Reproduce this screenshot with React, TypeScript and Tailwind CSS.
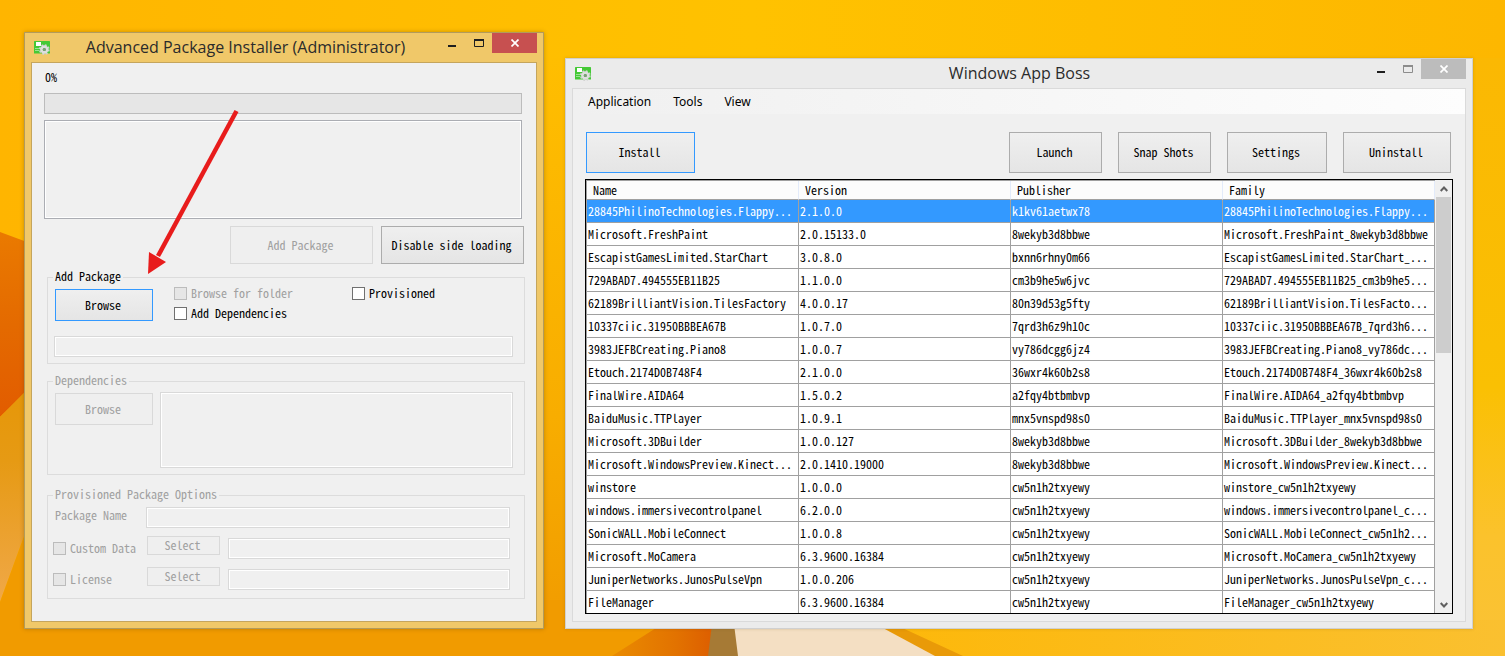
import React from "react";

type Row = [string, string, string, string];

const rows: Row[] = [
  ["28845PhilinoTechnologies.Flappy...", "2.1.0.0", "k1kv61aetwx78", "28845PhilinoTechnologies.Flappy..."],
  ["Microsoft.FreshPaint", "2.0.15133.0", "8wekyb3d8bbwe", "Microsoft.FreshPaint_8wekyb3d8bbwe"],
  ["EscapistGamesLimited.StarChart", "3.0.8.0", "bxnn6rhny0m66", "EscapistGamesLimited.StarChart_..."],
  ["729ABAD7.494555EB11B25", "1.1.0.0", "cm3b9he5w6jvc", "729ABAD7.494555EB11B25_cm3b9he5..."],
  ["62189BrilliantVision.TilesFactory", "4.0.0.17", "80n39d53g5fty", "62189BrilliantVision.TilesFacto..."],
  ["10337ciic.31950BBBEA67B", "1.0.7.0", "7qrd3h6z9h10c", "10337ciic.31950BBBEA67B_7qrd3h6..."],
  ["3983JEFBCreating.Piano8", "1.0.0.7", "vy786dcgg6jz4", "3983JEFBCreating.Piano8_vy786dc..."],
  ["Etouch.2174D0B748F4", "2.1.0.0", "36wxr4k60b2s8", "Etouch.2174D0B748F4_36wxr4k60b2s8"],
  ["FinalWire.AIDA64", "1.5.0.2", "a2fqy4btbmbvp", "FinalWire.AIDA64_a2fqy4btbmbvp"],
  ["BaiduMusic.TTPlayer", "1.0.9.1", "mnx5vnspd98s0", "BaiduMusic.TTPlayer_mnx5vnspd98s0"],
  ["Microsoft.3DBuilder", "1.0.0.127", "8wekyb3d8bbwe", "Microsoft.3DBuilder_8wekyb3d8bbwe"],
  ["Microsoft.WindowsPreview.Kinect...", "2.0.1410.19000", "8wekyb3d8bbwe", "Microsoft.WindowsPreview.Kinect..."],
  ["winstore", "1.0.0.0", "cw5n1h2txyewy", "winstore_cw5n1h2txyewy"],
  ["windows.immersivecontrolpanel", "6.2.0.0", "cw5n1h2txyewy", "windows.immersivecontrolpanel_c..."],
  ["SonicWALL.MobileConnect", "1.0.0.8", "cw5n1h2txyewy", "SonicWALL.MobileConnect_cw5n1h2..."],
  ["Microsoft.MoCamera", "6.3.9600.16384", "cw5n1h2txyewy", "Microsoft.MoCamera_cw5n1h2txyewy"],
  ["JuniperNetworks.JunosPulseVpn", "1.0.0.206", "cw5n1h2txyewy", "JuniperNetworks.JunosPulseVpn_c..."],
  ["FileManager", "6.3.9600.16384", "cw5n1h2txyewy", "FileManager_cw5n1h2txyewy"],
];

const columns = ["Name", "Version", "Publisher", "Family"];

function Wallpaper() {
  return (
    <svg className="absolute inset-0 h-full w-full" viewBox="0 0 1505 656" preserveAspectRatio="none" aria-hidden="true">
      <defs>
        <linearGradient id="sky" x1="0" y1="0" x2="1" y2="0">
          <stop offset="0" stopColor="#ffb500" />
          <stop offset="0.5" stopColor="#ffc200" />
          <stop offset="1" stopColor="#fdb700" />
        </linearGradient>
        <linearGradient id="east" x1="0" y1="0" x2="0" y2="1">
          <stop offset="0" stopColor="#fbb803" />
          <stop offset="0.55" stopColor="#fac003" />
          <stop offset="0.8" stopColor="#fbc22c" />
          <stop offset="1" stopColor="#fac236" />
        </linearGradient>
        <linearGradient id="mid" x1="0" y1="0" x2="0" y2="1">
          <stop offset="0" stopColor="#ffbe00" />
          <stop offset="0.6" stopColor="#f8ad00" />
          <stop offset="1" stopColor="#f09900" />
        </linearGradient>
        <linearGradient id="fold" x1="0" y1="0" x2="0" y2="1">
          <stop offset="0" stopColor="#ea7a00" />
          <stop offset="0.5" stopColor="#e46a00" />
          <stop offset="1" stopColor="#e25c00" />
        </linearGradient>
        <linearGradient id="sand" x1="0" y1="0" x2="0" y2="1">
          <stop offset="0" stopColor="#e69500" />
          <stop offset="0.45" stopColor="#e69a14" />
          <stop offset="1" stopColor="#f0a848" />
        </linearGradient>
        <linearGradient id="ember" x1="0" y1="0" x2="1" y2="0">
          <stop offset="0" stopColor="#ea8b00" />
          <stop offset="0.6" stopColor="#e27200" />
          <stop offset="1" stopColor="#dc5a00" />
        </linearGradient>
        <linearGradient id="dune" x1="0" y1="0" x2="1" y2="0">
          <stop offset="0" stopColor="#fdb80a" />
          <stop offset="1" stopColor="#fac030" />
        </linearGradient>
      </defs>
      <rect width="1505" height="656" fill="url(#sky)" />
      <rect x="540" y="58" width="40" height="598" fill="url(#mid)" />
      <rect x="1460" y="58" width="45" height="598" fill="url(#east)" />
      <path d="M0 232 L70 258 L70 350 L0 417 Z" fill="url(#fold)" />
      <path d="M0 417 L70 346 L70 410 L0 602 Z" fill="url(#sand)" />
      <path d="M0 602 L70 410 L70 600 L720 600 L720 656 L0 656 Z" fill="#f19b00" />
      <path d="M700 600 L720 600 L720 656 L612 656 Z" fill="url(#ember)" />
      <path d="M715 600 L732 600 L740 656 L708 656 Z" fill="#a67a35" />
      <path d="M731 600 L850 600 L940 656 L738 656 Z" fill="#f4dfc3" />
      <path d="M868 620 L900 620 L970 656 L935 656 Z" fill="#e99a08" />
      <path d="M885 620 L1505 620 L1505 656 L963 656 Z" fill="url(#dune)" />
    </svg>
  );
}

function AppIcon() {
  return (
    <svg className="h-[14px] w-4 shrink-0" viewBox="0 0 16 14" aria-hidden="true">
      <rect x="0" y="0" width="16" height="12.500" rx="0.6" fill="#45c936" />
      <rect x="2" y="1" width="5" height="4" fill="#fff" />
      <path d="M1 7.5h4.500M1 9.5h4.500" stroke="#9be291" strokeWidth="1" />
      <circle cx="10.300" cy="8.500" r="4.400" fill="none" stroke="#cfcfcf" strokeWidth="2" strokeDasharray="1.9 1.55" />
      <circle cx="10.300" cy="8.500" r="2.900" fill="none" stroke="#dedede" strokeWidth="2.600" />
      <circle cx="10.300" cy="8.500" r="1.500" fill="#7f9b7c" />
    </svg>
  );
}

function TitleBar({ title, active }: { title: string; active: boolean }) {
  return (
    <header className="flex h-[29px] items-start">
      <div className={active ? "flex w-7 shrink-0 pt-2 pl-[9px]" : "flex w-[106px] shrink-0 pt-2 pl-[9px]"}>
        <AppIcon />
      </div>
      <h1 className="flex-1 text-center font-['Open_Sans','Noto_Sans',sans-serif] text-[16px] leading-[29px] whitespace-nowrap text-[#2b2b2b]">
        {title}
      </h1>
      <div className="mr-1.5 flex h-5 shrink-0">
        <button type="button" aria-label="Minimize" className="flex w-[27px] items-center justify-center">
          <svg className="h-[10px] w-[10px]" viewBox="0 0 10 10" aria-hidden="true">
            <rect x="1" y="7" width="8" height="2" fill="#1e1e1e" />
          </svg>
        </button>
        <button type="button" aria-label="Maximize" className={active ? "flex w-[27px] items-center justify-center text-[#1e1e1e]" : "flex w-[27px] items-center justify-center text-[#8c8c8c]"}>
          <svg className="h-[10px] w-[10px]" viewBox="0 0 10 10" aria-hidden="true">
            <path d="M0.5 1.5h9v7h-9z" fill="none" stroke="currentColor" />
            <rect x="0" y="1" width="10" height="2" fill="currentColor" />
          </svg>
        </button>
        <button type="button" aria-label="Close" className={active ? "flex w-[45px] items-center justify-center bg-[#c75050]" : "flex w-[45px] items-center justify-center bg-[#bcbcbc]"}>
          <svg className="h-2 w-2" viewBox="0 0 8 8" aria-hidden="true">
            <path d="M0.5 0.5l7 7M7.5 0.5l-7 7" stroke="#fff" strokeWidth="1.7" />
          </svg>
        </button>
      </div>
    </header>
  );
}

function PushButton({ children, size, disabled, focused }: { children: React.ReactNode; size: string; disabled?: boolean; focused?: boolean }) {
  const look = disabled
    ? "border-[#d9d9d9] bg-[#efefef] text-[#a0a0a0]"
    : focused
      ? "border-[#3399ff] bg-linear-to-b from-[#efefef] to-[#e5e5e5] text-black"
      : "border-[#acacac] bg-linear-to-b from-[#efefef] to-[#e5e5e5] text-black";
  return (
    <button type="button" disabled={disabled} className={`flex shrink-0 items-center justify-center border pr-0.5 pb-px whitespace-nowrap ${look} ${size}`}>
      {children}
    </button>
  );
}

function CheckBox({ children, disabled }: { children: React.ReactNode; disabled?: boolean }) {
  return (
    <label className={disabled ? "flex h-[13px] items-start gap-1 leading-[11px] whitespace-nowrap text-[#a0a0a0]" : "flex h-[13px] items-start gap-1 leading-[11px] whitespace-nowrap text-black"}>
      <input
        type="checkbox"
        disabled={disabled}
        className="h-[13px] w-[13px] shrink-0 appearance-none border border-[#707070] bg-white disabled:border-[#bcbcbc] disabled:bg-[#e6e6e6]"
      />
      {children}
    </label>
  );
}

const field = "block resize-none border border-[#d9d9d9] bg-[#f0f0f0] px-1 shadow-[inset_0_0_0_1px_#fff] outline-none";
const group = "ml-[3px] -mr-[3px] border border-[#dcdcdc]";
const legend = "ml-[5px] h-[13px] px-0.5 leading-[10px]";

function Installer() {
  return (
    <section className="relative mt-8 w-[520px] shrink-0 self-start border border-[#b29b5c] bg-[#f0c869] shadow-[0_0_4px_rgba(90,60,0,0.35)]">
      <TitleBar title="Advanced Package Installer (Administrator)" active />
      <div className="mx-1.5 mb-1.5 flex flex-col border border-[#c5a55c] bg-[#f0f0f0] pt-[7px] pr-[14px] pb-[22px] pl-3">
        <p className="ml-px leading-[13px]">0%</p>
        <div role="progressbar" aria-label="Progress" aria-valuenow={0} className="mt-[10px] h-[21px] border border-[#bcbcbc] bg-[#e6e6e6]" />
        <textarea aria-label="Log" readOnly className="mt-1.5 block h-[99px] resize-none border border-[#abadb3] bg-[#f0f0f0] shadow-[inset_0_0_0_1px_#fff] outline-none" />
        <div className="mt-[7px] -mr-0.5 flex justify-end gap-2">
          <PushButton size="h-[38px] w-[143px]" disabled>Add Package</PushButton>
          <PushButton size="h-[38px] w-[143px]">Disable side loading</PushButton>
        </div>

        <fieldset className={`mt-[7px] ${group}`}>
          <legend className={legend}>Add Package</legend>
          <div className="flex pt-[5px] pl-[7px]">
            <PushButton size="h-8 w-[98px]" focused>Browse</PushButton>
            <div className="ml-[21px] -mt-0.5 flex w-[178px] flex-col gap-[7px]">
              <CheckBox disabled>Browse for folder</CheckBox>
              <CheckBox>Add Dependencies</CheckBox>
            </div>
            <div className="-mt-0.5">
              <CheckBox>Provisioned</CheckBox>
            </div>
          </div>
          <div className="pt-[15px] pr-[11px] pb-1.5 pl-1.5">
            <input type="text" aria-label="Package path" disabled className={`h-[21px] w-full ${field}`} />
          </div>
        </fieldset>

        <fieldset disabled className={`mt-[11px] text-[#a0a0a0] ${group}`}>
          <legend className={legend}>Dependencies</legend>
          <div className="flex gap-[7px] pt-1 pr-[11px] pb-1.5 pl-[7px]">
            <PushButton size="mt-px h-8 w-[98px]" disabled>Browse</PushButton>
            <textarea aria-label="Dependencies" className={`h-[76px] flex-1 ${field}`} />
          </div>
        </fieldset>

        <fieldset disabled className={`mt-[14px] text-[#a0a0a0] ${group}`}>
          <legend className={legend}>Provisioned Package Options</legend>
          <div className="flex flex-col gap-[10px] pt-[5px] pr-[14px] pb-2 pl-[5px]">
            <div className="flex h-[21px] items-center">
              <label htmlFor="package-name" className="w-[93px] pb-1.5 pl-0.5">Package Name</label>
              <input id="package-name" type="text" className={`h-[21px] flex-1 ${field}`} />
            </div>
            <div className="flex h-[21px] items-center">
              <div className="w-[94px]"><CheckBox disabled>Custom Data</CheckBox></div>
              <div className="mr-2 pb-1.5"><PushButton size="h-[19px] w-[73px]" disabled>Select</PushButton></div>
              <input type="text" aria-label="Custom data path" className={`h-[21px] min-w-0 flex-1 ${field}`} />
            </div>
            <div className="flex h-[21px] items-center">
              <div className="w-[94px]"><CheckBox disabled>License</CheckBox></div>
              <div className="mr-2 pb-1.5"><PushButton size="h-[19px] w-[73px]" disabled>Select</PushButton></div>
              <input type="text" aria-label="License path" className={`h-[21px] min-w-0 flex-1 ${field}`} />
            </div>
          </div>
        </fieldset>
      </div>

      <svg className="pointer-events-none absolute top-[73px] left-[119px] h-[172px] w-[98px]" viewBox="0 0 98 172" aria-hidden="true">
        <path d="M92.500 5 L14 150" stroke="#e81c1c" strokeWidth="4.500" />
        <path d="M4 168 L5 146 L22 156 Z" fill="#e81c1c" />
      </svg>
    </section>
  );
}

function ScrollBar() {
  return (
    <div className="flex w-[17px] shrink-0 flex-col bg-[#f0f0f0] px-px" aria-hidden="true">
      <div className="flex h-[17px] items-center justify-center">
        <svg className="h-2 w-2" viewBox="0 0 8 8"><path d="M0.700 6L4 2.500L7.300 6" fill="none" stroke="#606060" strokeWidth="2" /></svg>
      </div>
      <div className="h-[156px] bg-[#cdcdcd]" />
      <div className="flex-1" />
      <div className="flex h-[17px] items-center justify-center">
        <svg className="h-2 w-2" viewBox="0 0 8 8"><path d="M0.700 2L4 5.500L7.300 2" fill="none" stroke="#606060" strokeWidth="2" /></svg>
      </div>
    </div>
  );
}

function AppBoss() {
  return (
    <section className="mt-[58px] mr-8 min-w-0 flex-1 self-start border border-[#d0d0d0] bg-[#ebebeb] shadow-[0_0_3px_rgba(90,60,0,0.2)]">
      <TitleBar title="Windows App Boss" active={false} />
      <div className="mx-1.5 mb-1.5 border border-[#dadada] bg-[#f0f0f0] pb-[7px]">
        <nav className="flex h-[25px] items-center gap-[22px] bg-linear-to-r from-[#f0f0f0] to-[#fdfdfd] pl-[15px] font-['Noto_Sans',sans-serif] text-[12px]">
          <button type="button">Application</button>
          <button type="button">Tools</button>
          <button type="button">View</button>
        </nav>
        <div className="flex pt-[18px] pr-[14px] pl-[13px]">
          <PushButton size="h-[41px] w-[109px]" focused>Install</PushButton>
          <div className="ml-auto flex gap-4">
            <PushButton size="h-[41px] w-[93px]">Launch</PushButton>
            <PushButton size="h-[41px] w-[93px]">Snap Shots</PushButton>
            <PushButton size="h-[41px] w-[100px]">Settings</PushButton>
            <PushButton size="h-[41px] w-[108px]">Uninstall</PushButton>
          </div>
        </div>
        <div className="mt-1.5 mr-3 ml-3 flex border border-black bg-white">
          <div className="min-w-0 flex-1 border-t border-l border-[#a0a0a0]">
            <table className="w-full table-fixed border-separate border-spacing-0">
              <thead>
                <tr className="h-[19px]">
                  {columns.map((c) => (
                    <th key={c} scope="col" className="border-r border-b border-r-[#e3ebfa] border-b-[#a0a0a0] bg-[#fcfcfc] p-0 pl-1.5 text-left font-normal">
                      {c}
                    </th>
                  ))}
                </tr>
              </thead>
              <tbody>
                {rows.map((r, i) => (
                  <tr key={r[0]} className={i === 0 ? "group bg-[#3399ff] text-white" : "group bg-white text-black"}>
                    {r.map((cell, j) => (
                      <td key={j} className="h-[23px] overflow-hidden border-r border-b border-[#a0a0a0] p-0 pl-px whitespace-nowrap group-last:h-[22px] group-last:border-b-0">
                        {cell}
                      </td>
                    ))}
                  </tr>
                ))}
              </tbody>
            </table>
          </div>
          <ScrollBar />
        </div>
      </div>
    </section>
  );
}

export default function App() {
  return (
    <main className="relative min-h-screen overflow-hidden bg-[#ffbc00]">
      <Wallpaper />
      <div className="relative flex gap-[21px] pl-6 font-['Noto_Sans_Mono_CJK_SC','Liberation_Mono',monospace] text-[12px] leading-[14px]">
        <Installer />
        <AppBoss />
      </div>
    </main>
  );
}
